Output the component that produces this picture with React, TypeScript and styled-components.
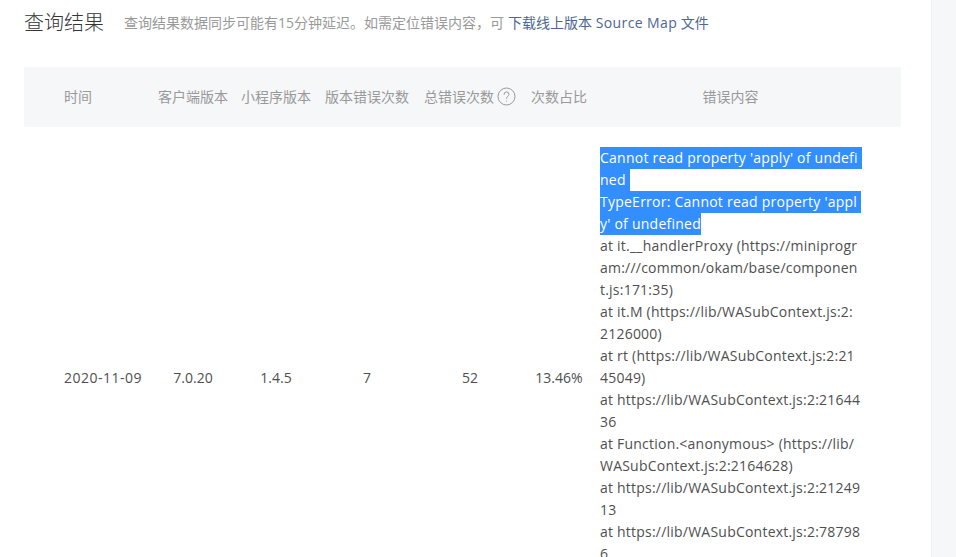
import styled, { createGlobalStyle } from "styled-components";

const GlobalStyle = createGlobalStyle`
  html, body {
    margin: 0;
    padding: 0;
    height: 100%;
    overflow: hidden;
    background-color: #fff;
  }
  body {
    font-family: "Open Sans", "Noto Sans CJK SC", sans-serif;
  }
`;

const Page = styled.div`
  display: flex;
  height: 557px;
  overflow: hidden;
`;

const Main = styled.main`
  width: 931px;
  flex-shrink: 0;
  padding: 0 30px 0 24px;
  box-sizing: border-box;
`;

const Aside = styled.aside`
  flex: 1;
  background-color: #f6f7f9;
  border-left: 1px solid #f0f1f3;
`;

const TitleRow = styled.div`
  display: flex;
  align-items: center;
  height: 42px;
  margin-bottom: 25px;
`;

const Title = styled.h2`
  margin: 0 20px 0 0;
  font-size: 20px;
  font-weight: 300;
  color: #353535;
`;

const Hint = styled.span`
  padding-top: 2px;
  font-size: 14px;
  color: #999;
`;

const Link = styled.a`
  color: #4d6598;
  margin-left: 4px;
`;

const LinkLatin = styled.span`
  letter-spacing: 0.4px;
`;

const Grid = `
  display: grid;
  grid-template-columns: 127.5px 83px 83px 99px 107px 71px 272px;
  width: 877px;
`;

const HeadRow = styled.div`
  ${Grid}
  height: 60px;
  align-items: center;
  background-color: #f6f7f9;
  color: #999;
  font-size: 14px;
`;

const BodyRow = styled.div`
  ${Grid}
  padding: 20px 0;
  align-items: center;
  color: #4f4f4f;
  font-size: 14px;
`;

const Cell = styled.div<{ $first?: boolean }>`
  display: flex;
  align-items: center;
  justify-content: ${(p) => (p.$first ? "flex-start" : "center")};
  padding-left: ${(p) => (p.$first ? "40px" : "0")};
  padding-bottom: 2px;
  white-space: nowrap;
`;

const DateText = styled.span`
  letter-spacing: 0.5px;
`;

const HelpIcon = styled.svg`
  width: 19px;
  height: 19px;
  margin-left: 3px;
  flex-shrink: 0;
`;

const Log = styled.div`
  align-self: start;
  min-height: 462px;
  padding-left: 5.5px;
  font-size: 14px;
  line-height: 22px;
  white-space: nowrap;
  letter-spacing: 0.22px;
`;

const LogLine = styled.div`
  height: 22px;
`;

const Selected = styled.span<{ $trail?: boolean }>`
  display: inline-block;
  height: 22px;
  padding-right: ${(p) => (p.$trail ? "4px" : "0")};
  background-color: #338fff;
  color: #fff;
  letter-spacing: 0.24px;
`;

const selectedLines = [
  { text: "Cannot read property 'apply' of undefi", trail: true },
  { text: "ned", trail: true },
  { text: "TypeError: Cannot read property 'appl", trail: true },
  { text: "y' of undefined", trail: false },
];

const logLines = [
  "at it.__handlerProxy (https://miniprogr",
  "am:///common/okam/base/componen",
  "t.js:171:35)",
  "at it.M (https://lib/WASubContext.js:2:",
  "2126000)",
  "at rt (https://lib/WASubContext.js:2:21",
  "45049)",
  "at https://lib/WASubContext.js:2:21644",
  "36",
  "at Function.<anonymous> (https://lib/",
  "WASubContext.js:2:2164628)",
  "at https://lib/WASubContext.js:2:21249",
  "13",
  "at https://lib/WASubContext.js:2:78798",
  "6",
];

export default function App() {
  return (
    <Page>
      <GlobalStyle />
      <Main>
        <TitleRow>
          <Title>查询结果</Title>
          <Hint>
            查询结果数据同步可能有15分钟延迟。如需定位错误内容，可
            <Link>
              下载线上版本 <LinkLatin>Source Map</LinkLatin> 文件
            </Link>
          </Hint>
        </TitleRow>
        <HeadRow>
          <Cell $first>时间</Cell>
          <Cell>客户端版本</Cell>
          <Cell>小程序版本</Cell>
          <Cell>版本错误次数</Cell>
          <Cell>
            总错误次数
            <HelpIcon viewBox="0 0 19 19" fill="none" stroke="#999" strokeWidth="1">
              <circle cx="9.5" cy="9.5" r="8.5" />
              <path d="M7 7.4a2.5 2.5 0 0 1 5 0c0 1.7-2.5 2-2.5 4" strokeLinecap="round" />
              <path d="M9.5 13.6v.9" />
            </HelpIcon>
          </Cell>
          <Cell>次数占比</Cell>
          <Cell>错误内容</Cell>
        </HeadRow>
        <BodyRow>
          <Cell $first>
            <DateText>2020-11-09</DateText>
          </Cell>
          <Cell>7.0.20</Cell>
          <Cell>1.4.5</Cell>
          <Cell>7</Cell>
          <Cell>52</Cell>
          <Cell>13.46%</Cell>
          <Log>
            {selectedLines.map((line) => (
              <LogLine key={line.text}>
                <Selected $trail={line.trail}>{line.text}</Selected>
              </LogLine>
            ))}
            {logLines.map((line) => (
              <LogLine key={line}>{line}</LogLine>
            ))}
          </Log>
        </BodyRow>
      </Main>
      <Aside />
    </Page>
  );
}
